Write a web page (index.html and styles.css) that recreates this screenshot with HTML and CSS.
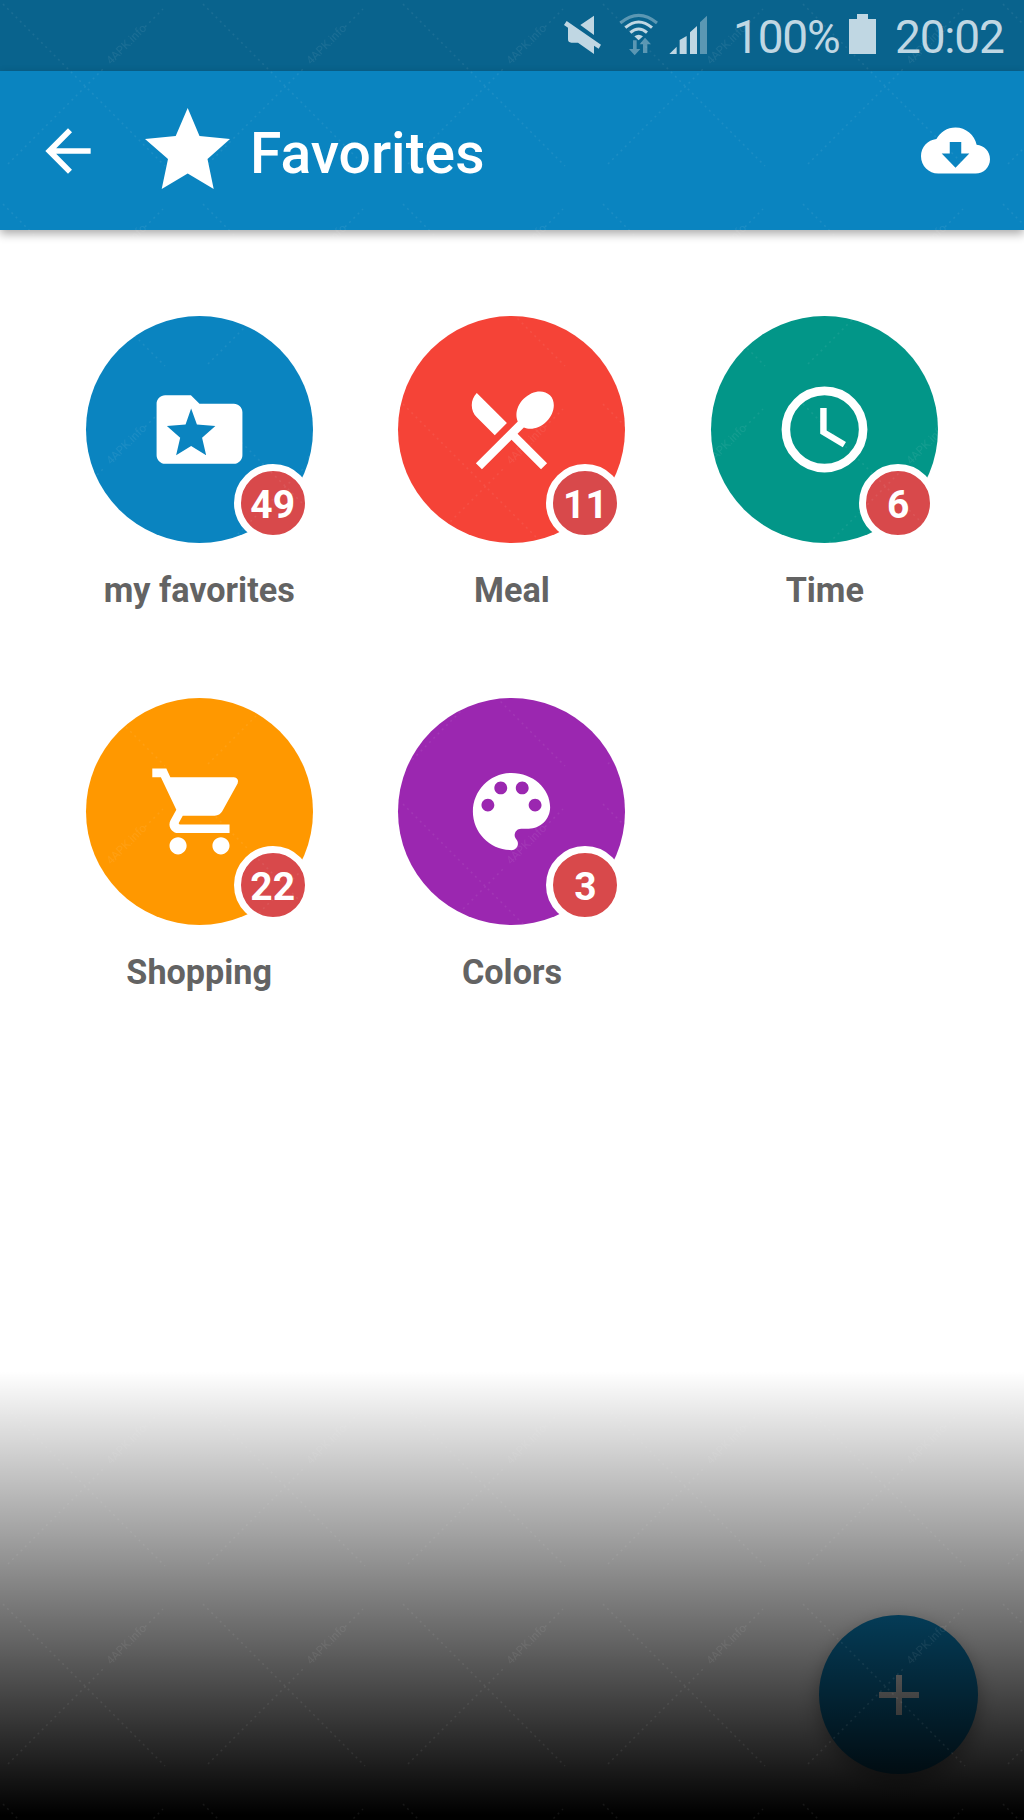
FILE: index.html
```html
<!DOCTYPE html>
<html lang="en">

<head>
    <meta charset="UTF-8">
    <meta name="viewport" content="width=device-width, initial-scale=1.0">
    <title>Favorites</title>
    <link rel="stylesheet" href="styles.css">
</head>

<body>
    <div class="screen">
        <div class="status-bar">
            <svg class="mute" viewBox="69 42 114 120">
                <path d="M162 47v58l-41-30zM80 63l103 71-7 12-14-9v25l-48-34H94q-10 0-10-10V83l-12-8z" />
            </svg>
            <svg class="wifi" viewBox="237 39 120 129">
                <g class="dim">
                    <path class="line" d="M241 69q55-46 110 0" />
                    <path d="M279 121h11v26h11l-17 19-17-19h12zM315 113l18 20h-11v26h-13v-26h-10z" />
                </g>
                <path class="line" d="M256 83q40-34 80 0M271 98q25-22 50 0" />
                <path d="M283 109q13-9 26 0l-13 12z" />
            </svg>
            <svg class="signal" viewBox="387 45 117 117">
                <path d="M388 162l22-22v22zM419 162v-42l21-12v54zM450 162V97l21-19v84z" />
                <path class="dim" d="M480 162V67l21-20v115z" />
            </svg>
            <span class="percent">100%</span>
            <svg class="battery" viewBox="0 0 27 40">
                <path d="M8 0h11v5h8v35H0V5h8z" />
            </svg>
            <span class="clock">20:02</span>
        </div>

        <div class="app-bar">
            <svg class="back" viewBox="0 0 24 24">
                <path d="M20 11H7.83l5.59-5.59L12 4l-8 8 8 8 1.41-1.41L7.83 13H20z" />
            </svg>
            <svg class="star" viewBox="145 108 85 81">
                <path d="M187.7 108l11.8 28 30.5 3-22.5 20 6.2 30-26-15.6-26 15.6 6.3-30-23-20 30.7-3z" />
            </svg>
            <h1>Favorites</h1>
            <svg class="cloud" viewBox="0 0 24 24">
                <path d="M19.35 10.04C18.67 6.59 15.64 4 12 4 9.11 4 6.6 5.64 5.35 8.04 2.34 8.36 0 10.91 0 14c0 3.31 2.69 6 6 6h13c2.76 0 5-2.24 5-5 0-2.64-2.05-4.78-4.65-4.96zM16.8 13L12 18l-4.8-5H10V9h4v4z" />
            </svg>
        </div>

        <div class="grid">
            <div class="item">
                <div class="circle blue">
                    <svg viewBox="0 0 24 24">
                        <path fill-rule="evenodd" d="M10 4H4c-1.1 0-2 .9-2 2v12c0 1.1.9 2 2 2h16c1.1 0 2-.9 2-2V8c0-1.1-.9-2-2-2h-8zM10.05 7.1l1.35 3.75 4.3.35-3.1 2.7.95 4.1-3.5-2.15L6.55 18l.95-4.1-3.1-2.7 4.35-.35z" />
                    </svg>
                    <span class="badge">49</span>
                </div>
                <div class="label">my favorites</div>
            </div>
            <div class="item">
                <div class="circle red">
                    <svg viewBox="0 0 24 24">
                        <path d="M8.1 13.34l2.83-2.83L3.91 3.5c-1.56 1.56-1.56 4.09 0 5.66l4.19 4.18zm6.78-1.81c1.53.71 3.68.21 5.27-1.38 1.91-1.91 2.28-4.65.81-6.12-1.46-1.46-4.2-1.1-6.12.81-1.59 1.59-2.09 3.74-1.38 5.27L3.7 19.87l1.41 1.41L12 14.41l6.88 6.88 1.41-1.41L13.41 13l1.47-1.47z" />
                    </svg>
                    <span class="badge">11</span>
                </div>
                <div class="label">Meal</div>
            </div>
            <div class="item">
                <div class="circle green">
                    <svg viewBox="0 0 24 24">
                        <circle cx="12" cy="12" r="9" fill="none" stroke="#fff" stroke-width="2" />
                        <path d="M12.5 7H11v6l5.25 3.15.75-1.23-4.5-2.67z" />
                    </svg>
                    <span class="badge">6</span>
                </div>
                <div class="label">Time</div>
            </div>
            <div class="item">
                <div class="circle orange">
                    <svg viewBox="0 0 24 24">
                        <path d="M7 18c-1.1 0-1.99.9-1.99 2S5.9 22 7 22s2-.9 2-2-.9-2-2-2zM1 2v2h2l3.6 7.59-1.35 2.45c-.16.28-.25.61-.25.96 0 1.1.9 2 2 2h12v-2H7.42c-.14 0-.25-.11-.25-.25l.03-.12.9-1.63h7.45c.75 0 1.41-.41 1.75-1.03l3.58-6.49A1.003 1.003 0 0 0 20 4H5.21l-.94-2H1zm16 16c-1.1 0-1.99.9-1.99 2s.89 2 1.99 2 2-.9 2-2-.9-2-2-2z" />
                    </svg>
                    <span class="badge">22</span>
                </div>
                <div class="label">Shopping</div>
            </div>
            <div class="item">
                <div class="circle purple">
                    <svg viewBox="0 0 24 24">
                        <path d="M12 3c-4.97 0-9 4.03-9 9s4.03 9 9 9c.83 0 1.5-.67 1.5-1.5 0-.39-.15-.74-.39-1.01-.23-.26-.38-.61-.38-.99 0-.83.67-1.5 1.5-1.5H16c2.76 0 5-2.24 5-5 0-4.42-4.03-8-9-8zm-5.5 9c-.83 0-1.5-.67-1.5-1.5S5.67 9 6.5 9 8 9.67 8 10.5 7.33 12 6.5 12zm3-4C8.67 8 8 7.33 8 6.5S8.67 5 9.5 5s1.5.67 1.5 1.5S10.33 8 9.5 8zm5 0c-.83 0-1.5-.67-1.5-1.5S13.67 5 14.5 5s1.5.67 1.5 1.5S15.33 8 14.5 8zm3 4c-.83 0-1.5-.67-1.5-1.5S16.67 9 17.5 9s1.5.67 1.5 1.5-.67 1.5-1.5 1.5z" />
                    </svg>
                    <span class="badge">3</span>
                </div>
                <div class="label">Colors</div>
            </div>
        </div>

        <div class="fab">
            <svg viewBox="0 0 40 40">
                <path d="M17 0h6v17h17v6H23v17h-6V23H0v-6h17z" />
            </svg>
        </div>
        <div class="fade"></div>

        <svg class="watermark">
            <defs>
                <pattern id="tile" width="200" height="200" patternUnits="userSpaceOnUse">
                    <path d="M3 4l162 162M8 164l97-97M145 27l18-18" />
                    <text x="111" y="65" transform="rotate(-45 111 65)">4APK.info</text>
                </pattern>
            </defs>
            <rect width="1024" height="1820" fill="url(#tile)" />
        </svg>
    </div>
</body>

</html>
```

FILE: styles.css
```css
* {
    box-sizing: border-box;
}

body {
    margin: 0;
    font-family: Roboto, sans-serif;
    background-color: #fff;
}

svg {
    display: block;
    flex: none;
    fill: #fff;
}

.screen {
    position: relative;
    width: 1024px;
    height: 1820px;
    overflow: hidden;
}

/* top bars */
.status-bar {
    display: flex;
    justify-content: flex-end;
    height: 71px;
    padding: 14px 20px 0 0;
    background-color: #09638d;
    color: #c0d7e3;
    font-size: 46px;
    letter-spacing: -1.2px;
    line-height: 46px;
}

.status-bar svg {
    fill: #c0d7e3;
}

.status-bar .dim {
    opacity: 0.45;
}

.mute {
    width: 38px;
    height: 40px;
    margin-right: 18px;
}

.wifi {
    width: 40px;
    height: 43px;
    margin-top: -1px;
    margin-right: 10px;
}

.wifi .line {
    fill: none;
    stroke: #c0d7e3;
    stroke-width: 9;
}

.signal {
    width: 39px;
    height: 39px;
    margin-top: 1px;
    margin-right: 25px;
}

.percent {
    width: 108px;
}

.battery {
    width: 27px;
    height: 40px;
    margin-right: 19px;
    margin-left: 8px;
}

.clock {
    width: 109px;
}

.app-bar {
    display: flex;
    align-items: center;
    height: 159px;
    padding: 0 34px;
    background-color: #0a84c0;
    box-shadow: 0 4px 9px rgba(0, 0, 0, 0.33);
}

.app-bar h1 {
    margin: 6px auto 0 20px;
    color: #fff;
    font-size: 57px;
    font-weight: 500;
}

.back {
    width: 68px;
    height: 68px;
}

.star {
    width: 85px;
    height: 81px;
    margin-top: -4px;
    margin-left: 43px;
}

.cloud {
    width: 69px;
    height: 69px;
}

/* categories */
.grid {
    display: grid;
    grid-template-columns: repeat(3, 312.8px);
    grid-auto-rows: 382px;
    justify-content: center;
    padding-top: 86px;
}

.item {
    display: flex;
    flex-direction: column;
    align-items: center;
}

.circle {
    position: relative;
    display: flex;
    align-items: center;
    justify-content: center;
    width: 227px;
    height: 227px;
    border-radius: 50%;
}

.circle svg {
    width: 103px;
    height: 103px;
}

.blue {
    background-color: #0a84c0;
}

.red {
    background-color: #f54337;
}

.green {
    background-color: #029688;
}

.orange {
    background-color: #ff9800;
}

.purple {
    background-color: #9b27b0;
}

.badge {
    position: absolute;
    right: 1px;
    bottom: 1px;
    width: 78px;
    height: 78px;
    border: 7px solid #fff;
    border-radius: 50%;
    background-color: #d8494b;
    color: #fff;
    font-size: 39px;
    font-weight: bold;
    line-height: 68px;
    text-align: center;
}

.label {
    margin-top: 27px;
    color: #636363;
    font-size: 34.2px;
    font-weight: bold;
    line-height: 40px;
}

.fab {
    position: absolute;
    right: 46px;
    bottom: 46px;
    display: flex;
    align-items: center;
    justify-content: center;
    width: 159px;
    height: 159px;
    border-radius: 50%;
    background-color: #0a84c0;
    box-shadow: 0 8px 20px rgba(0, 0, 0, 0.35);
}

.fab svg {
    width: 40px;
    height: 40px;
}

.fade {
    position: absolute;
    right: 0;
    bottom: 0;
    left: 0;
    height: 449px;
    background: linear-gradient(transparent, #000 444px);
}

.watermark {
    position: absolute;
    top: 0;
    left: 0;
    width: 1024px;
    height: 1820px;
    opacity: 0.07;
}

.watermark path {
    fill: none;
    stroke: #fff;
    stroke-width: 1.5;
    stroke-dasharray: 2 4;
}

.watermark text {
    font-size: 11.5px;
}
```
